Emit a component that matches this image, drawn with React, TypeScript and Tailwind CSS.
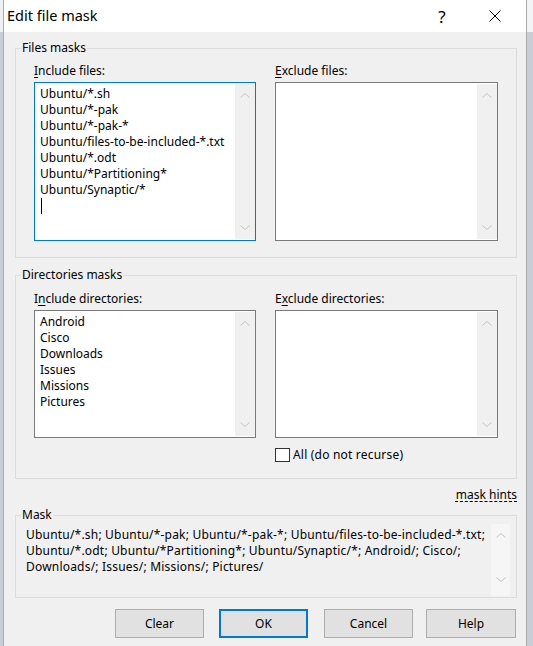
import * as React from "react"

const includeFiles = [
  "Ubuntu/*.sh",
  "Ubuntu/*-pak",
  "Ubuntu/*-pak-*",
  "Ubuntu/files-to-be-included-*.txt",
  "Ubuntu/*.odt",
  "Ubuntu/*Partitioning*",
  "Ubuntu/Synaptic/*",
]

const includeDirs = ["Android", "Cisco", "Downloads", "Issues", "Missions", "Pictures"]

const maskLines = [
  "Ubuntu/*.sh; Ubuntu/*-pak; Ubuntu/*-pak-*; Ubuntu/files-to-be-included-*.txt;",
  "Ubuntu/*.odt; Ubuntu/*Partitioning*; Ubuntu/Synaptic/*; Android/; Cisco/;",
  "Downloads/; Issues/; Missions/; Pictures/",
]

function Chevron({ up }: { up?: boolean }) {
  return (
    <svg width="10" height="5" viewBox="0 0 10 5" fill="none" stroke="#c2c2c2" strokeWidth="1">
      {up ? <polyline points="0.5,4.5 5,0.5 9.5,4.5" /> : <polyline points="0.5,0.5 5,4.5 9.5,0.5" />}
    </svg>
  )
}

function ScrollTrack({ className = "" }: { className?: string }) {
  return (
    <div className={`flex flex-col items-center justify-between ${className}`}>
      <Chevron up />
      <Chevron />
    </div>
  )
}

function ListBox({
  lines,
  focused,
  caret,
  className = "",
}: {
  lines: string[]
  focused?: boolean
  caret?: boolean
  className?: string
}) {
  return (
    <div
      className={`flex bg-white border ${focused ? "border-[#0078d7]" : "border-[#7a7a7a]"} ${className}`}
    >
      <div className="flex-1 pl-[5px] pt-[3px] leading-[16px]">
        {lines.map((l) => (
          <div key={l} className="whitespace-nowrap">
            {l}
          </div>
        ))}
        {caret && <div className="ml-[1px] h-[16px] w-[1px] bg-black" />}
      </div>
      <ScrollTrack className="my-[1px] w-[20px] bg-[#f0f0f0] py-[9px]" />
    </div>
  )
}

function Group({
  label,
  className = "",
  children,
}: {
  label: string
  className?: string
  children: React.ReactNode
}) {
  return (
    <div className={`relative border border-[#dcdcdc] ${className}`}>
      <span className="absolute -top-[9px] left-[5px] bg-[#f0f0f0] px-[1px] leading-[16px]">{label}</span>
      {children}
    </div>
  )
}

function Label({ pre, u, post }: { pre: string; u: string; post: string }) {
  return (
    <div className="leading-[16px]">
      {pre}
      <span className="underline underline-offset-[2px]">{u}</span>
      {post}
    </div>
  )
}

function Button({ children, className = "", primary }: { children: React.ReactNode; className?: string; primary?: boolean }) {
  return (
    <button
      className={`flex h-[29px] items-center justify-center bg-[#e1e1e1] ${
        primary ? "border-2 border-[#0078d7]" : "border border-[#adadad]"
      } ${className}`}
    >
      {children}
    </button>
  )
}

export default function App() {
  return (
    <div className="flex h-[646px] w-[533px] overflow-hidden bg-[#d3d7dd] font-['Noto_Sans',sans-serif] text-[12px] text-black">
      <div className="flex w-[3px] flex-col">
        <div className="h-[32px] bg-[#eef0f3]" />
        <div className="flex-1 bg-[#c9ced6]" />
      </div>

      <div className="flex w-[524px] flex-col border-x border-[#aaaaaa] bg-[#f0f0f0]">
        {/* title bar */}
        <div className="flex h-[32px] items-center bg-white">
          <span className="pl-[3px] text-[14.5px]">Edit file mask</span>
          <span className="ml-auto flex w-[20px] justify-center text-[17px] leading-none">?</span>
          <svg className="ml-[37px] mr-[25px]" width="12" height="12" viewBox="0 0 12 12" stroke="#000" strokeWidth="1">
            <line x1="0.5" y1="0.5" x2="11.5" y2="11.5" />
            <line x1="11.5" y1="0.5" x2="0.5" y2="11.5" />
          </svg>
        </div>

        <div className="flex flex-col pl-[11px] pr-[9px]">
          <Group label="Files masks" className="mt-[16px] px-[18px] pb-[16px] pt-[14px]">
            <div className="flex gap-[19px]">
              <div className="flex w-[222px] flex-col">
                <Label pre="" u="I" post="nclude files:" />
                <ListBox lines={includeFiles} focused caret className="mt-[3px] h-[159px]" />
              </div>
              <div className="flex w-[223px] flex-col">
                <Label pre="" u="E" post="xclude files:" />
                <ListBox lines={[]} className="mt-[3px] h-[159px]" />
              </div>
            </div>
          </Group>

          <Group label="Directories masks" className="mt-[17px] px-[18px] pb-[16px] pt-[15px]">
            <div className="flex items-start gap-[19px]">
              <div className="flex w-[222px] flex-col">
                <Label pre="I" u="n" post="clude directories:" />
                <ListBox lines={includeDirs} className="mt-[3px] h-[128px]" />
              </div>
              <div className="flex w-[223px] flex-col">
                <Label pre="E" u="x" post="clude directories:" />
                <ListBox lines={[]} className="mt-[3px] h-[128px]" />
                <div className="mt-[10px] flex h-[14px] items-center">
                  <div className="h-[14px] w-[15px] border border-[#333333] bg-white" />
                  <span className="ml-[3px] leading-[16px] tracking-[0.2px]">All (do not recurse)</span>
                </div>
              </div>
            </div>
          </Group>

          <div className="mt-[8px] flex h-[16px] justify-end leading-[16px]">
            <span className="underline decoration-dashed underline-offset-[2px]">mask hints</span>
          </div>

          <Group label="Mask" className="mt-[12px] px-[6px] pb-[1px] pt-[8px]">
            <div className="flex h-[72px]">
              <div className="flex-1 pl-[4px] pt-[3px] leading-[16px] tracking-[0.2px]">
                {maskLines.map((l) => (
                  <div key={l} className="whitespace-nowrap">
                    {l}
                  </div>
                ))}
              </div>
              <ScrollTrack className="w-[19px] bg-[#f6f6f6] pb-[14px] pt-[9px]" />
            </div>
          </Group>

          <div className="mt-[11px] flex">
            <Button className="ml-[100px] w-[89px]">Clear</Button>
            <Button primary className="ml-[15px] w-[89px]">OK</Button>
            <Button className="ml-[16px] w-[89px]">Cancel</Button>
            <Button className="ml-[13px] w-[90px]">Help</Button>
          </div>
        </div>
      </div>

      <div className="flex w-[6px] flex-col">
        <div className="h-[32px] bg-[#f3f4f6]" />
        <div className="flex-1 bg-[#c9ced6]" />
      </div>
    </div>
  )
}
